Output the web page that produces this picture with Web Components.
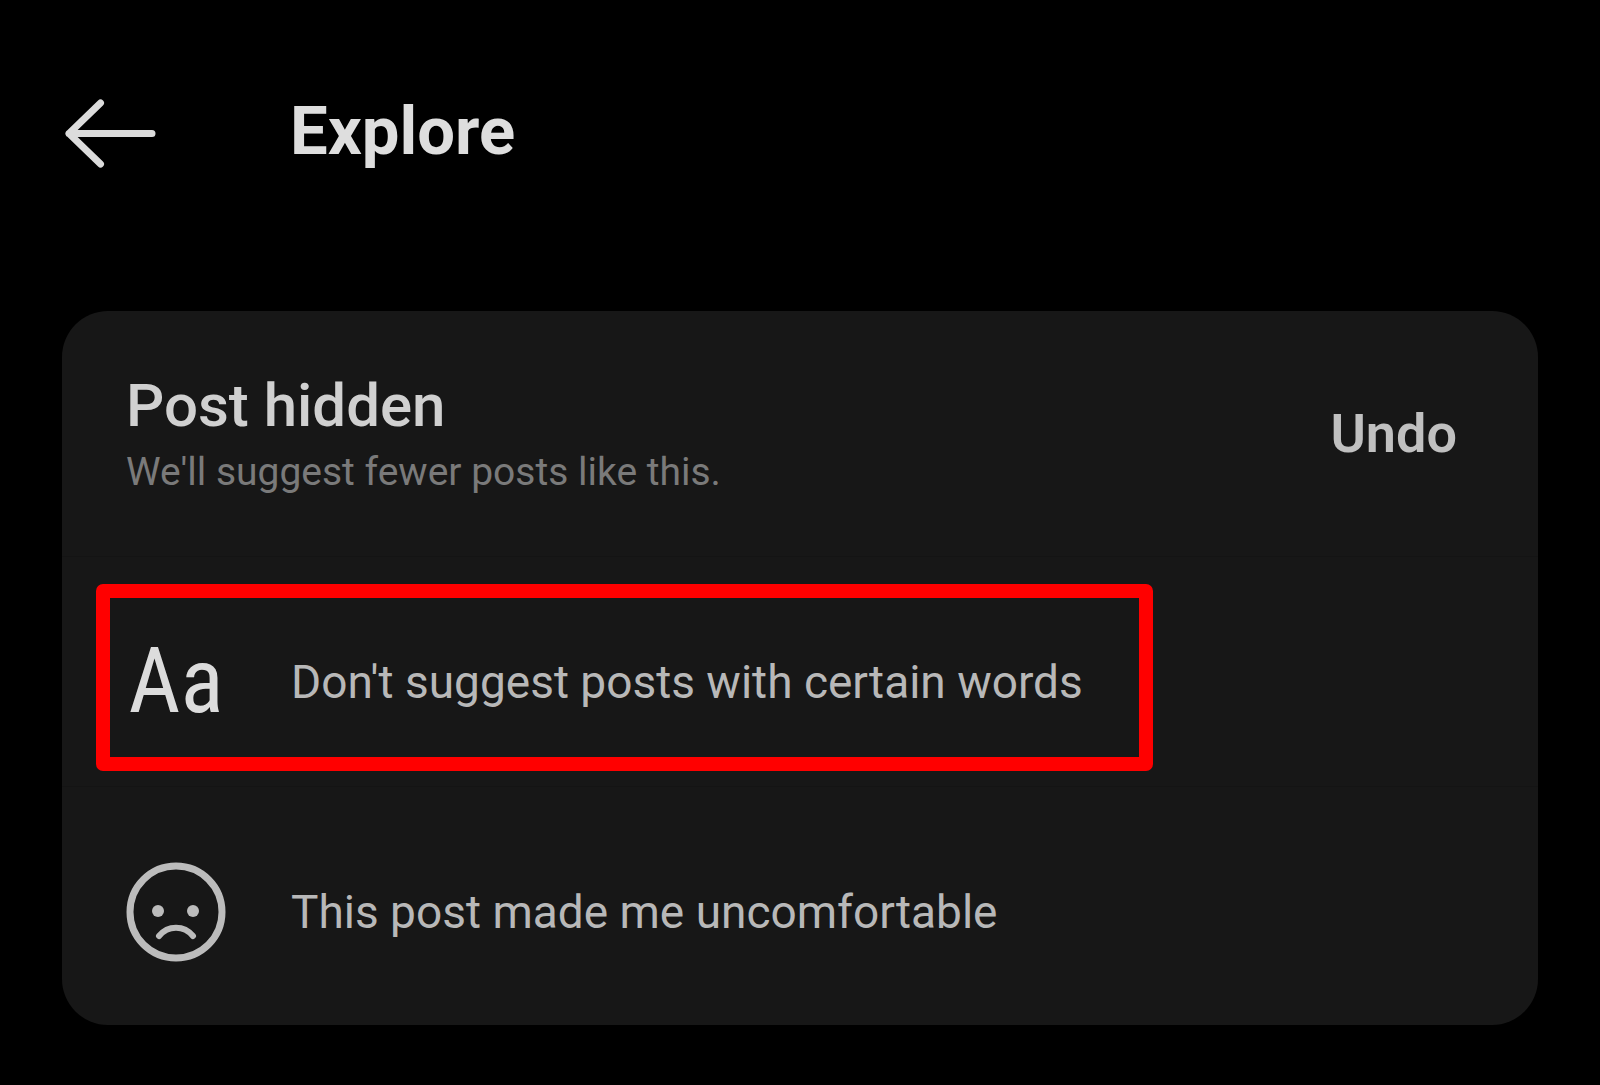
<!DOCTYPE html>
<html lang="en">
<head>
<meta charset="utf-8">
<title>Explore</title>
<style>
  html { background: #000; }
  body { margin: 0; background: #000; color: #dcdcdc; font-family: Roboto, "Liberation Sans", sans-serif; }
</style>
</head>
<body>
<explore-page>
  <page-header slot="header">Explore</page-header>
  <feedback-card>
    <hidden-notice>
      <span slot="title">Post hidden</span>
      <span slot="detail">We'll suggest fewer posts like this.</span>
      <span slot="action">Undo</span>
    </hidden-notice>
    <option-row highlighted>
      <text-icon slot="icon">Aa</text-icon>
      Don't suggest posts with certain words
    </option-row>
    <option-row>
      <sad-icon slot="icon"></sad-icon>
      This post made me uncomfortable
    </option-row>
  </feedback-card>
</explore-page>

<script>
const define = (name, html) => customElements.define(name, class extends HTMLElement {
  constructor() {
    super();
    this.attachShadow({ mode: "open" }).innerHTML = html;
  }
});

define("explore-page", `
  <style>
    :host { display: block; }
    main { padding: 0 62px 60px; }
  </style>
  <slot name="header"></slot>
  <main><slot></slot></main>
`);

define("page-header", `
  <style>
    :host { display: block; }
    header { display: flex; align-items: center; gap: 130px; padding: 91px 62px 140px; }
    button { display: flex; margin: 0; padding: 0; border: 0; background: none; color: inherit; }
    svg { width: 98px; height: 80px; }
    h1 { margin: 0; font-size: 67px; line-height: 80px; font-weight: 700; color: #dedede; }
  </style>
  <header>
    <button type="button" aria-label="Back">
      <svg viewBox="0 0 98 80" fill="none" stroke="currentColor" stroke-width="7" stroke-linecap="round" stroke-linejoin="round" aria-hidden="true">
        <path d="M38.500 12L7 42.500L38.500 73M7 42.500H90"/>
      </svg>
    </button>
    <h1><slot></slot></h1>
  </header>
`);

define("feedback-card", `
  <style>
    :host { display: block; }
    section { padding-bottom: 9px; border-radius: 46px; background: #171717; overflow: hidden; }
  </style>
  <section><slot></slot></section>
`);

define("hidden-notice", `
  <style>
    :host { display: block; }
    div.notice { display: flex; align-items: center; justify-content: space-between; padding: 57px 81px 56px 64px; }
    h2, p { margin: 0; }
    h2 { font-size: 60px; line-height: 76px; font-weight: 500; color: #d0d0d0; }
    p { font-size: 39px; line-height: 56px; color: #7a7a7a; }
    button { margin: 0; padding: 0; border: 0; background: none; font: inherit; font-size: 54px; line-height: 64px; font-weight: 600; color: #c0c0c0; }
  </style>
  <div class="notice">
    <div>
      <h2><slot name="title"></slot></h2>
      <p><slot name="detail"></slot></p>
    </div>
    <button type="button"><slot name="action"></slot></button>
  </div>
`);

define("option-row", `
  <style>
    :host { display: block; border-top: 1px solid #141414; }
    button { display: block; width: 100%; margin: 0; padding: 27px 34px 15px; border: 0; background: none; color: #b8b8b8; font: inherit; text-align: left; }
    .frame { display: flex; align-items: center; gap: 65px; box-sizing: border-box; width: fit-content; height: 187px; padding: 9px 56px 0 16px; border: 14px solid transparent; border-radius: 7px; }
    :host([highlighted]) .frame { border-color: #f00; }
    .icon { display: flex; justify-content: center; width: 100px; }
    .label { font-size: 46px; line-height: 56px; }
  </style>
  <button type="button">
    <span class="frame">
      <span class="icon"><slot name="icon"></slot></span>
      <span class="label"><slot></slot></span>
    </span>
  </button>
`);

define("text-icon", `
  <style>
    :host { display: block; color: #dcdcdc; font-family: "Roboto Condensed", Roboto, sans-serif; font-size: 90px; line-height: 100px; font-weight: 400; }
  </style>
  <slot></slot>
`);

define("sad-icon", `
  <style>
    :host { display: block; }
    svg { display: block; width: 100px; height: 100px; color: #bcbcbc; }
  </style>
  <svg viewBox="0 0 100 100" fill="none" stroke="currentColor" stroke-width="7" stroke-linecap="round" aria-hidden="true">
    <circle cx="50" cy="50" r="46"/>
    <circle cx="32" cy="49" r="6" fill="currentColor" stroke="none"/>
    <circle cx="67" cy="49" r="6" fill="currentColor" stroke="none"/>
    <path d="M33 74C42 63 58 63 67 74" stroke-width="6"/>
  </svg>
`);
</script>
</body>
</html>
